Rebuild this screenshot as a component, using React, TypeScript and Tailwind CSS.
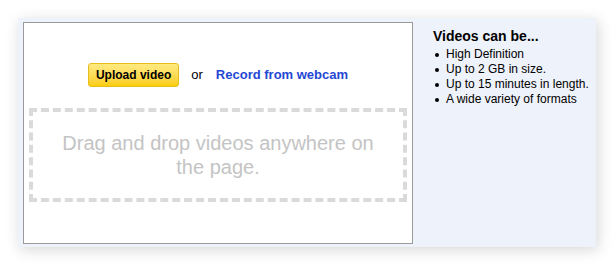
export default function App() {
  return (
    <div className="min-h-[270px] w-[616px] bg-white pl-[18px] pt-[18px] font-['Liberation_Sans',Arial,sans-serif]">
      <div className="flex h-[229px] w-[578px] bg-[#eef2fb] shadow-[2px_3px_14px_rgba(0,0,0,0.16)]">
        <div className="ml-[5px] mt-[4px] flex h-[222px] w-[390px] flex-col border border-[#9a9a9a] bg-white px-[5px] pt-[40px]">
          <div className="flex h-6 items-center justify-center">
            <button className="h-6 rounded-[3px] border border-[#e6be1c] bg-gradient-to-b from-[#ffea80] to-[#fccd00] px-[7px] text-[12px] font-bold text-black">
              Upload video
            </button>
            <span className="ml-3 text-[13px] text-black">or</span>
            <a className="ml-[13px] text-[13px] font-bold text-[#1f48d4]">Record from webcam</a>
          </div>
          <div className="mt-[21px] flex h-[94px] items-center justify-center border-4 border-dashed border-[#dadada] text-center text-[20px] leading-6 text-[#c4c4c4]">
            <p className="max-w-[330px]">Drag and drop videos anywhere on the page.</p>
          </div>
        </div>
        <div className="pl-5 pt-[10px] text-black">
          <h2 className="text-[14px] font-bold leading-[17px]">Videos can be...</h2>
          <ul className="mt-[2px] text-[12px] leading-[15px]">
            {["High Definition", "Up to 2 GB in size.", "Up to 15 minutes in length.", "A wide variety of formats"].map((t) => (
              <li key={t} className="flex items-center">
                <span className="ml-[2px] mr-[7px] h-[4px] w-[4px] rounded-full bg-black" />
                {t}
              </li>
            ))}
          </ul>
        </div>
      </div>
    </div>
  );
}
